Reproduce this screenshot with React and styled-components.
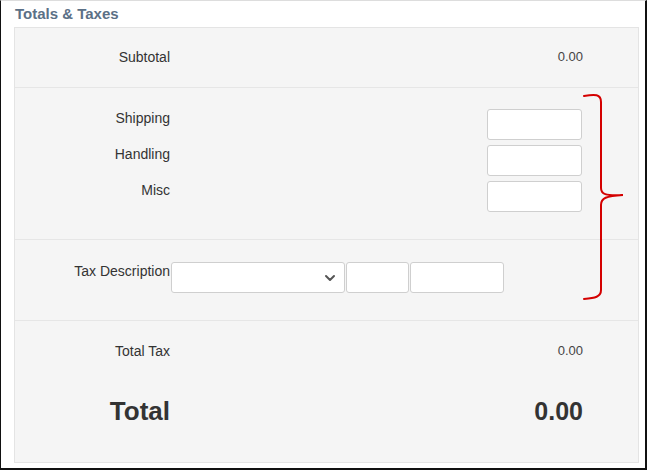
import styled, { createGlobalStyle } from "styled-components"

const Global = createGlobalStyle`
  html, body { margin: 0; padding: 0; background: #fff; }
  body { font-family: "Liberation Sans", Arial, sans-serif; color: #333; }
  * { box-sizing: border-box; }
`

const Frame = styled.div`
  position: relative;
  width: 647px;
  height: 470px;
  border: 1px solid #111;
  border-right-width: 2px;
  border-bottom-width: 2px;
  border-top-color: #ddd;
  padding: 4px 8px 0 13px;
`

const Title = styled.h3`
  margin: 0 0 4px 1px;
  font-size: 15px;
  font-weight: bold;
  line-height: 18px;
  color: #5b7086;
`

const Panel = styled.div`
  width: 625px;
  height: 436px;
  background: #f5f5f5;
  border: 1px solid #e4e4e4;
  display: flex;
  flex-direction: column;
`

const Section = styled.div`
  display: flex;
  flex-direction: column;
  gap: ${p => p.$gap || 0}px;
  padding: ${p => p.$pad};
  border-bottom: ${p => (p.$last ? "none" : "1px solid #e6e6e6")};
  flex: ${p => (p.$last ? 1 : "none")};
`

const Row = styled.div`
  display: grid;
  grid-template-columns: 156px 1fr auto;
  align-items: ${p => p.$align || "center"};
  min-height: ${p => p.$h || 16}px;
  padding-right: 55px;
`

const Label = styled.div`
  text-align: right;
  padding-right: 1px;
  font-size: ${p => (p.$big ? 26 : 14)}px;
  font-weight: ${p => (p.$big ? "bold" : "normal")};
  line-height: ${p => (p.$big ? 30 : 16)}px;
  color: #333;
  padding-top: ${p => p.$top || 0}px;
  white-space: nowrap;
`

const Value = styled.div`
  grid-column: 3;
  text-align: right;
  font-size: ${p => (p.$big ? 25 : 13)}px;
  font-weight: ${p => (p.$big ? "bold" : "normal")};
  line-height: ${p => (p.$big ? 30 : 16)}px;
  color: ${p => (p.$big ? "#333" : "#444")};
`

const Field = styled.div`
  grid-column: 3;
  margin-right: ${p => (p.$inline ? 0 : 1)}px;
  width: ${p => p.$w || 95}px;
  height: 31px;
  background: #fff;
  border: 1px solid #cfcfcf;
  border-radius: 3px;
`

const TaxFields = styled.div`
  grid-column: 2 / 4;
  display: flex;
  gap: 1px;
`

const Select = styled.div`
  width: 174px;
  height: 31px;
  background: #fff;
  border: 1px solid #cfcfcf;
  border-radius: 3px;
  display: flex;
  align-items: center;
  justify-content: flex-end;
  padding-right: 8px;
`

const Bracket = styled.svg`
  position: absolute;
  left: 578px;
  top: 88px;
  pointer-events: none;
`

const Chevron = () => (
  <svg width="12" height="8" viewBox="0 0 12 8">
    <path d="M2 2 L6 6 L10 2" fill="none" stroke="#555" strokeWidth="2" strokeLinecap="round" strokeLinejoin="round" />
  </svg>
)

const App = () => {
  const extras = ["Shipping", "Handling", "Misc"]

  return (
    <>
      <Global />
      <Frame>
        <Title>Totals &amp; Taxes</Title>
        <Panel>
          <Section $pad="21px 0 0" style={{ height: 60 }}>
            <Row>
              <Label>Subtotal</Label>
              <Value>0.00</Value>
            </Row>
          </Section>

          <Section $pad="21px 0 27px" $gap={5}>
            {extras.map(name => (
              <Row key={name} $align="start" $h={31}>
                <Label $top={1}>{name}</Label>
                <Field />
              </Row>
            ))}
          </Section>

          <Section $pad="22px 0 27px">
            <Row $align="start" $h={31}>
              <Label $top={1}>Tax Description</Label>
              <TaxFields>
                <Select>
                  <Chevron />
                </Select>
                <Field $inline $w={63} />
                <Field $inline $w={94} />
              </TaxFields>
            </Row>
          </Section>

          <Section $pad="22px 0 0" $gap={37} $last>
            <Row>
              <Label>Total Tax</Label>
              <Value>0.00</Value>
            </Row>
            <Row>
              <Label $big>Total</Label>
              <Value $big>0.00</Value>
            </Row>
          </Section>
        </Panel>

        <Bracket width="48" height="214" viewBox="0 0 48 214">
          <path
            d="M5 7 C16 5 22 5 22 13 L22 99 C22 105 26 107 44 106 C27 107 22 109 22 116 L22 201 C22 208 16 209 5 210"
            fill="none"
            stroke="#d40000"
            strokeWidth="2"
            strokeLinecap="round"
          />
        </Bracket>
      </Frame>
    </>
  )
}

export default App
